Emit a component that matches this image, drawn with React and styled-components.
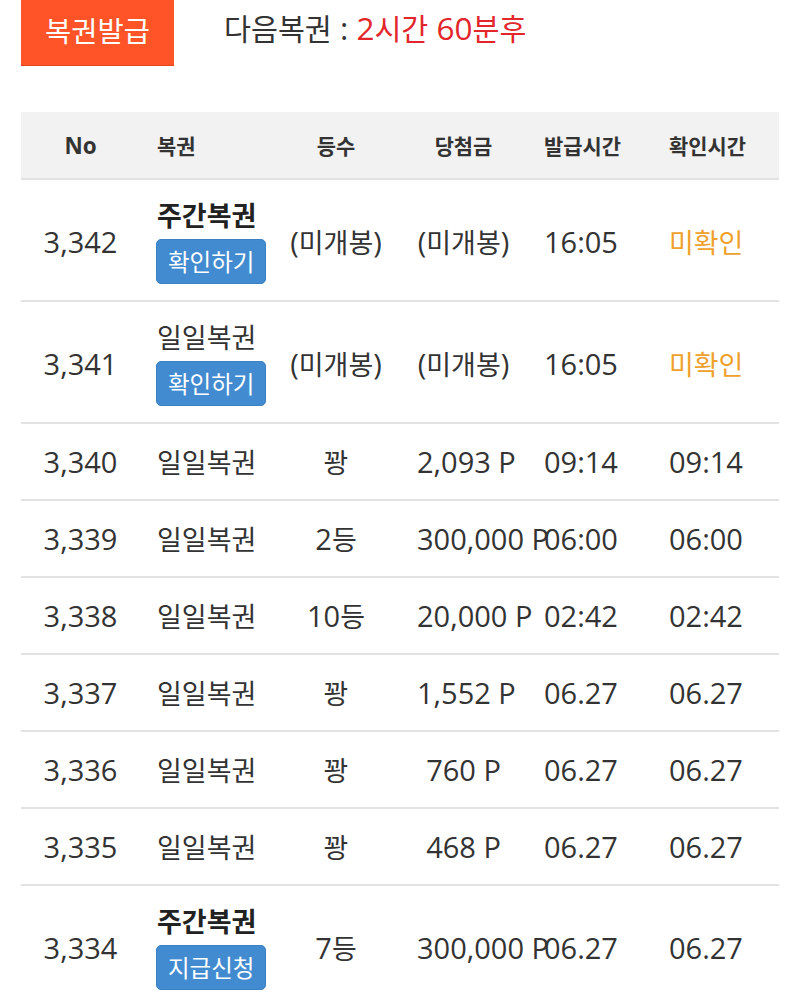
import styled, { createGlobalStyle } from "styled-components"

const GlobalStyle = createGlobalStyle`
    body {
        margin: 0;
        background: #ffffff;
        color: #333333;
        font-family: "Open Sans", "Noto Sans CJK KR", sans-serif;
    }
`

const HANGUL = /([\u3131-\u318E\uAC00-\uD7A3]+)/

// latin/digits are drawn a bit larger than the hangul in the original, so split runs
function Txt({ children }) {
    return String(children)
        .split(HANGUL)
        .filter(Boolean)
        .map((part, i) => (HANGUL.test(part) ? <Ko key={i}>{part}</Ko> : part))
}

const Ko = styled.span`
    font-family: "Noto Sans CJK KR", sans-serif;
    font-size: 0.93em;
`

const Page = styled.div`
    padding: 0 21px;
`

const TopBar = styled.div`
    display: flex;
    align-items: center;
    height: 66px;
`

const IssueButton = styled.button`
    width: 153px;
    height: 66px;
    border: none;
    border-bottom: 1px solid #e2471e;
    background: #ff5427;
    color: #ffffff;
    font-family: "Noto Sans CJK KR", sans-serif;
    font-size: 28.5px;
    padding: 0 0 6px;
`

const NextInfo = styled.div`
    margin-left: 50px;
    margin-top: -12px;
    font-size: 31.5px;
    color: #333333;
    white-space: nowrap;
`

const Red = styled.span`
    color: #e3262b;
`

const Table = styled.div`
    margin-top: 46px;
`

const Row = styled.div`
    display: grid;
    grid-template-columns: 119px 140px 112px 143px 125px 119px;
    min-height: ${p => (p.$head ? 66 : 75)}px;
    padding: ${p => (p.$tall ? "18px 0 16px" : "0")};
    background: ${p => (p.$head ? "#f2f2f2" : "transparent")};
    border-bottom: 2px solid #e2e2e2;
    font-size: ${p => (p.$head ? "22.5px" : "29px")};
    font-weight: ${p => (p.$head ? 700 : 400)};
    color: #333333;
`

const Cell = styled.div`
    display: flex;
    align-items: center;
    justify-content: ${p => (p.$left ? "flex-start" : "safe center")};
    padding: ${p => p.$pad || "0"};
    white-space: nowrap;
    color: ${p => (p.$warn ? "#efa12c" : "inherit")};
`

const NameCell = styled.div`
    display: flex;
    flex-direction: column;
    justify-content: center;
    align-items: flex-start;
    gap: 7px;
    padding-left: 17px;
    white-space: nowrap;
`

const Name = styled.div`
    font-family: "Noto Sans CJK KR", sans-serif;
    font-size: 27px;
    line-height: 34px;
    font-weight: ${p => (p.$bold ? 700 : 400)};
    color: ${p => (p.$bold ? "#222222" : "#333333")};
`

const ActionButton = styled.button`
    height: 45px;
    margin-left: -1px;
    padding: 0 11px 2px;
    border: 1px solid #3a80c2;
    border-radius: 5px;
    background: #428bd0;
    color: #ffffff;
    font-family: "Noto Sans CJK KR", sans-serif;
    font-size: 23.5px;
`

const rows = [
    { no: "3,342", name: "주간복권", bold: true, btn: "확인하기", rank: "(미개봉)", prize: "(미개봉)", issued: "16:05", checked: "미확인", warn: true },
    { no: "3,341", name: "일일복권", btn: "확인하기", rank: "(미개봉)", prize: "(미개봉)", issued: "16:05", checked: "미확인", warn: true },
    { no: "3,340", name: "일일복권", rank: "꽝", prize: "2,093 P", issued: "09:14", checked: "09:14" },
    { no: "3,339", name: "일일복권", rank: "2등", prize: "300,000 P", issued: "06:00", checked: "06:00" },
    { no: "3,338", name: "일일복권", rank: "10등", prize: "20,000 P", issued: "02:42", checked: "02:42" },
    { no: "3,337", name: "일일복권", rank: "꽝", prize: "1,552 P", issued: "06.27", checked: "06.27" },
    { no: "3,336", name: "일일복권", rank: "꽝", prize: "760 P", issued: "06.27", checked: "06.27" },
    { no: "3,335", name: "일일복권", rank: "꽝", prize: "468 P", issued: "06.27", checked: "06.27" },
    { no: "3,334", name: "주간복권", bold: true, btn: "지급신청", rank: "7등", prize: "300,000 P", issued: "06.27", checked: "06.27" },
]

export default function App() {
    return (
        <>
            <GlobalStyle />
            <Page>
                <TopBar>
                    <IssueButton>복권발급</IssueButton>
                    <NextInfo>
                        <Txt>다음복권 : </Txt>
                        <Red><Txt>2시간 60분후</Txt></Red>
                    </NextInfo>
                </TopBar>

                <Table>
                    <Row $head>
                        <Cell>No</Cell>
                        <Cell $left $pad="0 0 0 17px"><Txt>복권</Txt></Cell>
                        <Cell><Txt>등수</Txt></Cell>
                        <Cell $pad="0 25px"><Txt>당첨금</Txt></Cell>
                        <Cell $left $pad="0 0 0 9px"><Txt>발급시간</Txt></Cell>
                        <Cell $left $pad="0 0 0 9px"><Txt>확인시간</Txt></Cell>
                    </Row>
                    {rows.map(r => (
                        <Row key={r.no} $tall={!!r.btn}>
                            <Cell>{r.no}</Cell>
                            <NameCell>
                                <Name $bold={r.bold}>{r.name}</Name>
                                {r.btn && <ActionButton>{r.btn}</ActionButton>}
                            </NameCell>
                            <Cell><Txt>{r.rank}</Txt></Cell>
                            <Cell $pad="0 25px"><Txt>{r.prize}</Txt></Cell>
                            <Cell $left $pad="0 0 0 9px">{r.issued}</Cell>
                            <Cell $left $pad="0 0 0 9px" $warn={r.warn}><Txt>{r.checked}</Txt></Cell>
                        </Row>
                    ))}
                </Table>
            </Page>
        </>
    )
}
